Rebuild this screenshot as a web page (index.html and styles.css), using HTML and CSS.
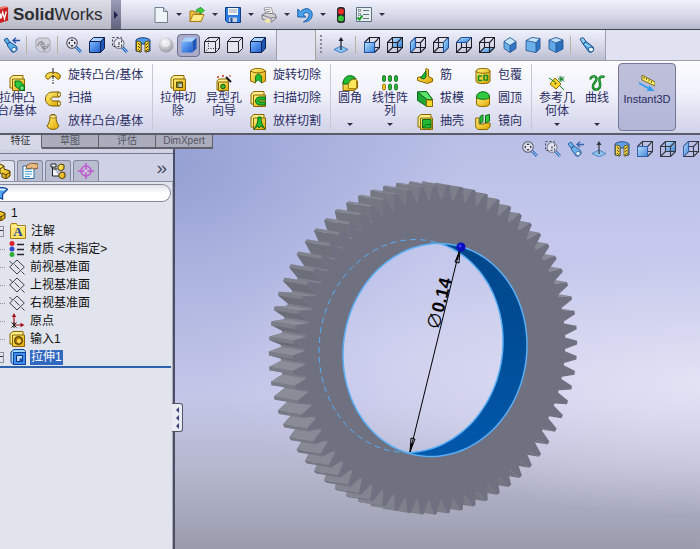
FILE: index.html
```html
<!DOCTYPE html>
<html lang="zh-CN">
<head>
<meta charset="utf-8">
<title>SolidWorks</title>
<link rel="stylesheet" href="styles.css">
<script src="gear.js" defer></script>
</head>
<body>
<svg class="sprite" aria-hidden="true">
  <defs>
    <linearGradient id="blue" x1="0" y1="0" x2="1" y2="1"><stop offset="0" stop-color="#b9e2ff"/><stop offset="1" stop-color="#2f7fd8"/></linearGradient>
    <linearGradient id="deep" x1="0" y1="0" x2="1" y2="1"><stop offset="0" stop-color="#7db8ff"/><stop offset="1" stop-color="#1f5fd0"/></linearGradient>
    <linearGradient id="gold" x1="0" y1="0" x2="1" y2="1"><stop offset="0" stop-color="#fff27a"/><stop offset="1" stop-color="#e0a500"/></linearGradient>
    <radialGradient id="ball" cx=".4" cy=".3" r=".7"><stop offset="0" stop-color="#fff"/><stop offset="1" stop-color="#9b9ca6"/></radialGradient>
    <linearGradient id="wall" x1="0" y1="0" x2="0" y2="1"><stop offset="0" stop-color="#00417f"/><stop offset=".45" stop-color="#004c94"/><stop offset="1" stop-color="#0060ba"/></linearGradient>
  </defs>
  <symbol id="new" viewBox="0 0 16 16"><path d="M2 .5h8.500l4 4v11H2z" fill="#eef4f8" stroke="#71808d"/><path d="M10.500.5v4h4" fill="#cfdbe4" stroke="#71808d"/></symbol>
  <symbol id="open" viewBox="0 0 16 16"><path d="M1 14.500V4h4l1 2h6v8.500z" fill="#f3c33c" stroke="#a8780c"/><path d="M1 14.500l3-7h11l-3 7z" fill="#ffe98a" stroke="#a8780c"/><path d="M7 5c0-3 2-4 4-3.500V0l4.500 3.500L11 7V5C9.500 4 8 4 7 5z" fill="#3fcf3a" stroke="#178a1a" stroke-width=".7"/></symbol>
  <symbol id="save" viewBox="0 0 16 16"><path d="M.5.5h15v15h-13l-2-2z" fill="#2d7be0" stroke="#123f86"/><path d="M3 1h10v7H3z" fill="#f4f6f8"/><path d="M4 3h8M4 5h8" stroke="#9aa2ac"/><path d="M4 10.500h8V15H4z" fill="#c9d2da"/><path d="M5.500 11h2v4h-2z" fill="#174b9a"/></symbol>
  <symbol id="print" viewBox="0 0 16 16"><path d="M3 1l7-1 2 6-7 2z" fill="#fff" stroke="#8c8c92" stroke-width=".8"/><path d="M1 8l4-2 9 1 1.500 4-5 4L1 12z" fill="#d3d3d6" stroke="#66666c" stroke-width=".8"/><path d="M1 8l9 3 5.500-1M10 11v4M4 3l5-1M5 5l5-1" fill="none" stroke="#707078" stroke-width=".8"/><path d="M3 13l5-1 2 3-4 1z" fill="#f5e9a4"/></symbol>
  <symbol id="undo" viewBox="0 0 16 16"><path d="M.8 2v8h8L6 7.500c2.500-3 6.500-2.500 6 1-.4 2.500-2.500 4.500-5.500 6.500 6-.5 9-3.500 8.700-8C14.800 1.500 8-.5 3.500 4.700z" fill="#4aa3ee" stroke="#1b5aa8"/></symbol>
  <symbol id="light" viewBox="0 0 16 16"><rect x="4" y="0" width="8" height="16" rx="3" fill="#26282c"/><circle cx="8" cy="4.500" r="3" fill="#ee2c28"/><circle cx="8" cy="11.500" r="3" fill="#35c738"/></symbol>
  <symbol id="list" viewBox="0 0 16 16"><path d="M.5.5h15v14H.5z" fill="#e8eef0" stroke="#5c7282"/><path d="M2.500 2.500h2v2h-2zM2.500 6.500h2v2h-2z" fill="#fff" stroke="#637788" stroke-width=".8"/><path d="M7 3.500h6M7 7.500h6M7 11.500h6" stroke="#637788"/><path d="M1.500 10.500l2 2 3-4" fill="none" stroke="#159b20" stroke-width="2"/></symbol>
  <symbol id="scope" viewBox="0 0 16 16"><path d="M1 2l3-1.500 3 4L4 7z" fill="#8fd0f5" stroke="#1c4f8e"/><path d="M4 7l3-2.500 7 5.500c2 3-1 6-4 5z" fill="#4ba4e8" stroke="#1c4f8e"/><circle cx="12" cy="12.500" r="2.500" fill="#e8fbff" stroke="#1c4f8e"/><path d="M6 7l5 3" stroke="#d8f4ff"/></symbol>
  <symbol id="prev" viewBox="0 0 16 16"><path d="M0 3l3-2 3 4-3 2zM3 8l3-3 6 4c3 3 0 7-4 6z" fill="#5db2ec" stroke="#1c4f8e"/><circle cx="10" cy="12.500" r="2.200" fill="#e8fbff" stroke="#1c4f8e" stroke-width=".8"/><path d="M9 3.500h7M12 .8L9 3.500l3 2.700" fill="none" stroke="#2352a8" stroke-width="1.300"/></symbol>
  <symbol id="redraw" viewBox="0 0 16 16"><path d="M1 3l3-2h9l2 3v9l-2 2H5l-4-4z" fill="#d0d1d8" stroke="#a6a7b2"/><path d="M3 9c0-4 4-5 6-2M6 4l3 3-4 1M13 7c1 4-3 6-6 3M10 14l-3-4 4-1" fill="none" stroke="#8f919d" stroke-width="1.300"/></symbol>
  <symbol id="zoomfit" viewBox="0 0 16 16"><path d="M10 10l5 5" stroke="#2a69c0" stroke-width="3"/><path d="M10 10l5 5" stroke="#9ad0ff"/><circle cx="6" cy="6" r="5.300" fill="#e9ebf2" stroke="#5d6070" stroke-width="1.200"/><path d="M6 2l1.600 2H4.400zM6 10l1.600-2H4.400zM2 6l2-1.600v3.200zM10 6L8 4.400v3.200z" fill="#22232c"/></symbol>
  <symbol id="zoomarea" viewBox="0 0 16 16"><path d="M10 10l5 5" stroke="#2a69c0" stroke-width="3"/><path d="M10 10l5 5" stroke="#9ad0ff"/><circle cx="7" cy="6.500" r="5" fill="#e9ebf2" stroke="#80838f" stroke-width="1.200"/><path d="M.5.5h9v9h-9z" fill="none" stroke="#333540" stroke-dasharray="2 2"/><path d="M7 5v3" stroke="#333540"/></symbol>
  <symbol id="section" viewBox="0 0 16 16"><path d="M1 3c3-3 11-3 14 0v11l-4 1V7H6v8l-5-1z" fill="#4d9be8" stroke="#1d3f7a"/><path d="M1.500 4L6 5v10l-4.500-1zM10 5l4-1v10l-4 1z" fill="#ffd92e" stroke="#4a3a00" stroke-width=".8"/><path d="M3 6l2 2M3 9l2 2M3 12l2 2M11 8l2-2M11 11l2-2M11 14l2-2" stroke="#4a3a00"/></symbol>
  <symbol id="ball3" viewBox="0 0 16 16"><circle cx="8" cy="8" r="7.500" fill="url(#ball)"/><circle cx="8" cy="6" r="4" fill="#f4f4f8" opacity=".6"/></symbol>
  <symbol id="solid" viewBox="0 0 16 16"><path d="M.5 4.500h11v11H.5z" fill="url(#deep)"/><path d="M.5 4.500l4-4h11l-4 4z" fill="#a9d2ff"/><path d="M11.500 4.500l4-4v11l-4 4z" fill="#1e55b8"/></symbol>
  <symbol id="solidedge" viewBox="0 0 16 16"><use href="#solid"/><path d="M.5 4.500h11v11H.5zl4-4h11v11l-4 4M11.500 4.500l4-4" fill="none" stroke="#0f2250"/></symbol>
  <symbol id="hidden" viewBox="0 0 16 16"><path d="M.5 4.500h11v11H.5zl4-4h11v11l-4 4M11.500 4.500l4-4" fill="#e2e4ee" stroke="#25262e"/><path d="M4.500 1v10.500h11M4.500 11.500l-4 4" fill="none" stroke="#25262e" stroke-dasharray="1 1.500"/></symbol>
  <symbol id="nohidden" viewBox="0 0 16 16"><path d="M.5 4.500h11v11H.5zl4-4h11v11l-4 4M11.500 4.500l4-4" fill="#e2e4ee" stroke="#25262e"/></symbol>
  <symbol id="wire" viewBox="0 0 16 16"><path d="M.5 5.500h10v10H.5zM5.500.5h10v10h-10zM.5 5.500l5-5M10.500 5.500l5-5M.5 15.500l5-5M10.500 15.500l5-5" fill="none" stroke="#1d1e26" stroke-width="1.100"/></symbol>
  <symbol id="front" viewBox="0 0 16 16"><use href="#wire"/><path d="M.5 5.500h10v10H.5z" fill="url(#blue)" stroke="#1b4f9a"/></symbol>
  <symbol id="back" viewBox="0 0 16 16"><path d="M5.500.5h10v10h-10z" fill="url(#blue)"/><use href="#wire"/></symbol>
  <symbol id="left" viewBox="0 0 16 16"><use href="#wire"/><path d="M.5 5.500l5-5v10l-5 5z" fill="url(#blue)" stroke="#1b4f9a"/></symbol>
  <symbol id="right" viewBox="0 0 16 16"><use href="#wire"/><path d="M10.500 5.500l5-5v10l-5 5z" fill="url(#blue)" stroke="#1b4f9a"/></symbol>
  <symbol id="top" viewBox="0 0 16 16"><use href="#wire"/><path d="M.5 5.500l5-5h10l-5 5z" fill="url(#blue)" stroke="#1b4f9a"/></symbol>
  <symbol id="bottom" viewBox="0 0 16 16"><path d="M.5 15.500l5-5h10l-5 5z" fill="url(#blue)" stroke="#1b4f9a"/><use href="#wire"/></symbol>
  <symbol id="iso" viewBox="0 0 16 16"><path d="M8 .5l6 4v7l-6 4-6-4v-7z" fill="#69afe9"/><path d="M8 .5l6 4-6 4-6-4z" fill="#c7e5fb"/><path d="M14 4.500v7l-6 4v-7z" fill="#3277c5"/><path d="M8 .5l6 4v7l-6 4-6-4v-7zM2 4.500l6 4 6-4M8 8.500v7" fill="none" stroke="#234f8b" stroke-width=".8"/></symbol>
  <symbol id="tri" viewBox="0 0 16 16"><path d="M1 3.500l6-3 8 1v10l-4 4-10-2z" fill="#69afe9"/><path d="M1 3.500l6-3 8 1-4 4z" fill="#c7e5fb"/><path d="M15 1.500v10l-4 4v-10z" fill="#3277c5"/><path d="M1 3.500l6-3 8 1v10l-4 4-10-2zl10 2 4-4M11 5.500v10" fill="none" stroke="#234f8b" stroke-width=".8"/></symbol>
  <symbol id="di" viewBox="0 0 16 16"><path d="M1 3l7-2.500L15 3v9l-7 3.500L1 12z" fill="#60a8e8"/><path d="M1 3l7-2.500L15 3 8 6z" fill="#bcdffa"/><path d="M15 3v9l-7 3.500V6z" fill="#2b6fc0"/><path d="M1 3l7-2.500L15 3v9l-7 3.500L1 12zl7 3 7-3M8 6v9" fill="none" stroke="#234f8b" stroke-width=".8"/></symbol>
  <symbol id="normal" viewBox="0 0 16 16"><path d="M1 12.500L8 9l7 3.500L8 16z" fill="#86c3f1" stroke="#2f6bae" stroke-width=".8"/><path d="M8 13V2" stroke="#1c1d26" stroke-width="1.200"/><path d="M8 0l2.500 4h-5z" fill="#1c1d26"/></symbol>
  <symbol id="box" viewBox="0 0 16 16"><path d="M1 3l3-2.500h10v9L11 13H1z" fill="#fff08a" stroke="#8a6500"/><path d="M3.500 4h12v11.500h-12z" fill="url(#gold)" stroke="#8a6500"/></symbol>
  <symbol id="extrude" viewBox="0 0 16 16"><use href="#box"/><path d="M6 6h5l4.500 5v4.500H12L6 11z" fill="#2fc83e" stroke="#0b6b18"/><path d="M11 11h4v4h-4z" fill="#77f081" stroke="#0b6b18" stroke-width=".8"/></symbol>
  <symbol id="revolve" viewBox="0 0 16 16"><path d="M.7 8c0-5 14.600-5 14.600 0 0 4-3.500 4-4.300 1.500-1-1.500-5-1.500-6 0C4.200 12 .7 12 .7 8z" fill="url(#gold)" stroke="#7a5900"/><path d="M8 0v16" stroke="#222" stroke-dasharray="4 1 1 1"/></symbol>
  <symbol id="sweep" viewBox="0 0 16 16"><path d="M14 1H8C-2 1-2 15 8 15h6v-5H9c-4 0-4-4 0-4h5z" fill="url(#gold)" stroke="#7a5900"/><ellipse cx="14" cy="3.500" rx="1.500" ry="2.500" fill="#fff2a0" stroke="#7a5900"/><ellipse cx="14" cy="12.500" rx="1.500" ry="2.500" fill="#fff2a0" stroke="#7a5900"/></symbol>
  <symbol id="loft" viewBox="0 0 16 16"><path d="M5 2c0-2 6-2 6 0 0 5 1 7 3 10-2 4.500-10 4.500-12 0 2-3 3-5 3-10z" fill="url(#gold)" stroke="#7a5900"/><ellipse cx="8" cy="2.500" rx="3" ry="1.500" fill="#fff2a0" stroke="#7a5900" stroke-width=".7"/></symbol>
  <symbol id="cut" viewBox="0 0 16 16"><use href="#box"/><path d="M6.500 7h6v5.500h-6z" fill="#6a7f2b" stroke="#5a4700"/><path d="M8.500 9H12v3H8.500z" fill="#bfc9c0"/></symbol>
  <symbol id="hole" viewBox="0 0 16 16"><path d="M1 6l2-2h9v8l-2 3H1z" fill="#fff08a" stroke="#8a6500"/><path d="M2.500 7h10v8.500h-10z" fill="url(#gold)" stroke="#8a6500"/><circle cx="7" cy="11.500" r="2.300" fill="#42b62e" stroke="#155a15"/><path d="M10 2l5 5" stroke="#15151a" stroke-width="2"/><path d="M2 1v2M1 2h2M7 0v2M6 1h2M14 0v2" stroke="#d3261c"/></symbol>
  <symbol id="revcut" viewBox="0 0 16 16"><path d="M.5 3c2-3.500 13-3.500 15 0v10l-4 2V9c-1-3-5-3-6 0v6l-5-2z" fill="url(#gold)" stroke="#8a6500"/><path d="M.5 3c4 2.500 11 2.500 15 0" fill="none" stroke="#8a6500"/><path d="M5.500 14V9c1-4 5-4 6 0v6l-3-3z" fill="#21bb35" stroke="#0b6b18" stroke-width=".7"/></symbol>
  <symbol id="sweepcut" viewBox="0 0 16 16"><use href="#box"/><path d="M15.500 6H10c-6 0-6 8 0 8h5.500v-3H10c-2 0-2-2 0-2h5.500z" fill="#21bb35" stroke="#0b6b18"/></symbol>
  <symbol id="loftcut" viewBox="0 0 16 16"><use href="#box"/><path d="M8 3h3c0 5 1 8 4 12l-4-3-2 2-1-2-4 3c3-4 4-7 4-12z" fill="#21bb35" stroke="#0b6b18"/></symbol>
  <symbol id="fillet" viewBox="0 0 16 16"><path d="M1 7l5-5h5l4.500 4v7L12 15.500H1z" fill="url(#gold)" stroke="#8a6500"/><path d="M1 9C1 3 5 0 9 .8c2 .2 4 1.200 5 3.200-5-1-7 2-7.500 5z" fill="#21bb35" stroke="#0b6b18"/><path d="M6.500 9c1-4 4-5 8-4.500v9H6.500z" fill="#ffe65a" stroke="#8a6500" stroke-width=".7"/></symbol>
  <symbol id="pattern" viewBox="0 0 16 16"><g fill="#25bd36" stroke="#0b5b17" stroke-width=".8"><rect x=".5" y=".5" width="3" height="6" rx="1.500"/><rect x="6.500" y=".5" width="3" height="6" rx="1.500"/><rect x="12.500" y=".5" width="3" height="6" rx="1.500"/><rect x="6.500" y="9" width="3" height="6" rx="1.500"/><rect x="12.500" y="9" width="3" height="6" rx="1.500"/></g><rect x=".5" y="9" width="3" height="6" rx="1.500" fill="#f0c020" stroke="#8a6500" stroke-width=".8"/></symbol>
  <symbol id="rib" viewBox="0 0 16 16"><path d="M9 .5l2.500 1v7l4 2v3l-5 2-10-3v-3L8 8z" fill="url(#gold)" stroke="#8a6500"/><path d="M3.500 10L9 3v6l-2 2z" fill="#21bb35" stroke="#0b6b18"/></symbol>
  <symbol id="draft" viewBox="0 0 16 16"><path d="M.5 1l9-.5 6 8v7H10l-9.500-6z" fill="#20a832" stroke="#0b6b18"/><path d="M.5 1l9-.5 6 8H10z" fill="#5ee36b" stroke="#0b6b18"/><path d="M9.500 9h6v6.500h-6z" fill="#ffd92e" stroke="#8a6500"/></symbol>
  <symbol id="shell" viewBox="0 0 16 16"><use href="#box"/><path d="M5.500 5.500h8.500V14H5.500z" fill="#21bb35" stroke="#0b6b18"/><path d="M5.500 14L9 10.500h5" fill="none" stroke="#0b6b18"/></symbol>
  <symbol id="wrap" viewBox="0 0 16 16"><path d="M1 3c0-3.500 14-3.500 14 0v10c0 3.500-14 3.500-14 0z" fill="url(#gold)" stroke="#8a6500"/><path d="M1 3c0 3 14 3 14 0" fill="none" stroke="#8a6500"/><path d="M7 8H3.500v4.500H7M9 7.500h3.500v4.500H9z" fill="none" stroke="#128f24" stroke-width="1.600"/></symbol>
  <symbol id="dome" viewBox="0 0 16 16"><path d="M1.500 6v7c0 3.500 13 3.500 13 0V6z" fill="url(#gold)" stroke="#8a6500"/><path d="M1.500 6c0-7 13-7 13 0 0 3-13 3-13 0z" fill="#2fc83e" stroke="#0b6b18"/></symbol>
  <symbol id="mirror" viewBox="0 0 16 16"><path d="M.7 4H4v6h5V9h6v4l-3 2.500H3L.7 13z" fill="url(#gold)" stroke="#8a6500"/><path d="M5 2.500L8 .8v6.700L5 9.500zM10.500 1.500l4-1V7l-4 2z" fill="#2fc83e" stroke="#0b6b18"/></symbol>
  <symbol id="refgeo" viewBox="0 0 16 16"><path d="M6 3l6 6-5 5-6-5z" fill="#ffd92e" stroke="#8a6500"/><path d="M0 3l6 4M12 1v6M9 4h6M10 1.500l5 5M15 1.500l-5 5M11 11l4 4" stroke="#117d20"/><circle cx="6.500" cy="8.500" r="1" fill="#553f00"/></symbol>
  <symbol id="curve" viewBox="0 0 16 16"><path d="M1.500 4.500C1.500 1 7 0 7.500 3.500S3 8 4 12.500c1 3 6 3 7-1s-2-6 0-9c1-1.500 3-1 4.500-.5" fill="none" stroke="#0b6b18" stroke-width="2.400"/><path d="M1.500 4.500C1.500 1 7 0 7.500 3.500S3 8 4 12.500c1 3 6 3 7-1s-2-6 0-9c1-1.500 3-1 4.500-.5" fill="none" stroke="#35c648"/></symbol>
  <symbol id="instant" viewBox="0 0 16 16"><path d="M3 0l13 7v4L3 5z" fill="#ffef6a" stroke="#5e5300" stroke-width=".8"/><path d="M5 2v2M7.500 3v2M10 4.500v2M12.500 6v2" stroke="#5e5300" stroke-width=".8"/><path d="M0 7l10 5.500V10l5.500 6h-8l1.500-2L0 9z" fill="#2f9df0"/></symbol>
  <symbol id="part" viewBox="0 0 16 16"><path d="M1 4l4-3 4 2v3l6 2v5l-4 3-4-2v-3L1 8z" fill="url(#gold)" stroke="#4d3800"/><path d="M1 4l4 2 4-3M5 6v4M7 10l4 2 4-3M11 12v4" fill="none" stroke="#4d3800"/></symbol>
  <symbol id="props" viewBox="0 0 16 16"><path d="M1 3h11v12.500H1z" fill="#fff" stroke="#2c6ea8"/><path d="M3 6h7M3 8.500h7M3 11h7M3 13.500h5" stroke="#3c9ad8"/><path d="M4 3l5-3 7 1v4l-4 1-2-1-5 1z" fill="#e9b982" stroke="#6d4215" stroke-width=".8"/></symbol>
  <symbol id="config" viewBox="0 0 16 16"><path d="M1 1h5v3H1zM2.500 4v9H9M2.500 6H7" fill="#f6f6f6" stroke="#222"/><path d="M8 3l3-2 3 1v4l-3 2-3-2zM9 11l3-2 3 1v4l-3 2-3-2z" fill="url(#gold)" stroke="#4d3800"/></symbol>
  <symbol id="target" viewBox="0 0 16 16"><circle cx="8" cy="8" r="5" fill="none" stroke="#c155cf" stroke-width="1.500"/><path d="M8 0v16M0 8h16" stroke="#c155cf" stroke-width="1.500"/><circle cx="8" cy="8" r="1.500" fill="#e8c8ee"/></symbol>
  <symbol id="filter" viewBox="0 0 16 16"><path d="M0 3c2-3 14-3 16 0l-6 6v6l-4-2V9z" fill="#4ea4f2" stroke="#123f96" stroke-width="1.500"/><ellipse cx="8" cy="3" rx="6" ry="1.200" fill="#d5edff"/></symbol>
  <symbol id="note" viewBox="0 0 16 16"><path d="M.5 15.500V2.500l1-2h5l1 2h8v13z" fill="#ffe36a" stroke="#a87d12"/><path d="M1 3.500h14" stroke="#fff6bd"/></symbol>
  <symbol id="material" viewBox="0 0 16 16"><circle cx="3" cy="2.500" r="2.500" fill="#d9232e"/><circle cx="3" cy="8" r="2.500" fill="#2a4bc9"/><circle cx="3" cy="13.500" r="2.500" fill="#2fae3c"/><path d="M8 3.500h7M8 8.500h7M8 13.500h7" stroke="#25252b" stroke-width="1.300"/></symbol>
  <symbol id="plane" viewBox="0 0 16 16"><path d="M.7 8L8 1l7.300 7L8 15zM.5 2l3 3M12.500 12.500l3 3M5.500 5.500l5 5" fill="none" stroke="#2e2e36" stroke-width=".9"/></symbol>
  <symbol id="origin" viewBox="0 0 16 16"><path d="M5 12V2M5 12h9" stroke="#a8121c" stroke-width="1.200"/><path d="M5 0l2.200 4H2.800zM15.500 12l-4-2.200v4.400z" fill="#a8121c"/><path d="M2.500 9.500l5 5M7.500 9.500l-5 5M5 9v6" stroke="#222"/></symbol>
  <symbol id="import" viewBox="0 0 16 16"><use href="#box"/><circle cx="9.500" cy="9.500" r="4" fill="#b07c00" stroke="#3d2b00"/><circle cx="10" cy="10" r="2" fill="#ffe25a"/></symbol>
  <symbol id="boss" viewBox="0 0 16 16"><path d="M1 3l3-2.500h10l1.500 2v13H3L1 13z" fill="#9ed5ff" stroke="#123f96"/><path d="M3.500 3.500h12v12h-12z" fill="#3a8ff0" stroke="#123f96"/><path d="M6.500 6.500h6v6h-6z" fill="#b9dcff" stroke="#0c2f78"/><path d="M9.500 9.500h3v3h-3z" fill="#1b50b0"/></symbol>
</svg>

<header class="titlebar">
  <div class="brand">
    <svg class="cube" viewBox="0 0 10 20" aria-hidden="true"><path d="M0 3l9-2v15l-9 3z" fill="#c9201f"/><path d="M0 1l6-1 3 1-9 3z" fill="#f07a70"/><path d="M0 8l1 6 2-7 2 7 2-8" fill="none" stroke="#fff" stroke-width="1.500"/></svg>
    <span><b>Solid</b>Works</span>
  </div>
  <button class="expand" aria-label="菜单"><i class="tri-right"></i></button>
  <nav class="quick">
    <button aria-label="新建"><svg><use href="#new"/></svg></button><i class="caret"></i>
    <button aria-label="打开"><svg><use href="#open"/></svg></button><i class="caret"></i>
    <button aria-label="保存"><svg><use href="#save"/></svg></button><i class="caret"></i>
    <button aria-label="打印"><svg><use href="#print"/></svg></button><i class="caret"></i>
    <button aria-label="撤消"><svg><use href="#undo"/></svg></button><i class="caret"></i>
    <button aria-label="重建模型"><svg><use href="#light"/></svg></button>
    <button aria-label="选项"><svg><use href="#list"/></svg></button><i class="caret"></i>
  </nav>
</header>

<div class="toolbars">
  <div class="bar bar-view">
    <button aria-label="上一视图"><svg><use href="#prev"/></svg></button><i class="sep"></i>
    <button aria-label="重画"><svg><use href="#redraw"/></svg></button><i class="sep"></i>
    <button aria-label="整屏显示"><svg><use href="#zoomfit"/></svg></button>
    <button aria-label="视图"><svg><use href="#solidedge"/></svg></button>
    <button aria-label="局部放大"><svg><use href="#zoomarea"/></svg></button>
    <button aria-label="剖面视图"><svg><use href="#section"/></svg></button>
    <button aria-label="外观"><svg><use href="#ball3"/></svg></button>
    <button class="pressed" aria-label="上色"><svg><use href="#solid"/></svg></button>
    <button aria-label="隐藏线可见"><svg><use href="#hidden"/></svg></button>
    <button aria-label="消除隐藏线"><svg><use href="#nohidden"/></svg></button>
    <button aria-label="带边线上色"><svg><use href="#solidedge"/></svg></button>
  </div>
  <div class="bar bar-std">
    <i class="grip"></i>
    <button aria-label="正视于"><svg><use href="#normal"/></svg></button><i class="sep"></i>
    <button aria-label="前视"><svg><use href="#front"/></svg></button>
    <button aria-label="后视"><svg><use href="#back"/></svg></button>
    <button aria-label="左视"><svg><use href="#left"/></svg></button>
    <button aria-label="右视"><svg><use href="#right"/></svg></button>
    <button aria-label="上视"><svg><use href="#top"/></svg></button>
    <button aria-label="下视"><svg><use href="#bottom"/></svg></button>
    <button aria-label="等轴测"><svg><use href="#iso"/></svg></button>
    <button aria-label="左右二等角轴测"><svg><use href="#tri"/></svg></button>
    <button aria-label="上下二等角轴测"><svg><use href="#di"/></svg></button><i class="sep"></i>
    <button aria-label="视图定向"><svg><use href="#scope"/></svg></button>
  </div>
</div>

<section class="ribbon">
  <button class="big first"><svg><use href="#extrude"/></svg><span>拉伸凸<br>台/基体</span></button>
  <div class="stack stack-a">
    <button><svg><use href="#revolve"/></svg>旋转凸台/基体</button>
    <button><svg><use href="#sweep"/></svg>扫描</button>
    <button><svg><use href="#loft"/></svg>放样凸台/基体</button>
  </div>
  <i class="rule"></i>
  <button class="big"><svg><use href="#cut"/></svg><span>拉伸切<br>除</span></button>
  <button class="big"><svg><use href="#hole"/></svg><span>异型孔<br>向导</span></button>
  <div class="stack stack-b">
    <button><svg><use href="#revcut"/></svg>旋转切除</button>
    <button><svg><use href="#sweepcut"/></svg>扫描切除</button>
    <button><svg><use href="#loftcut"/></svg>放样切割</button>
  </div>
  <i class="rule"></i>
  <button class="big narrow"><svg><use href="#fillet"/></svg><span>圆角</span><i class="caret"></i></button>
  <button class="big"><svg><use href="#pattern"/></svg><span>线性阵<br>列</span><i class="caret"></i></button>
  <div class="stack stack-c">
    <button><svg><use href="#rib"/></svg>筋</button>
    <button><svg><use href="#draft"/></svg>拔模</button>
    <button><svg><use href="#shell"/></svg>抽壳</button>
  </div>
  <div class="stack stack-c">
    <button><svg><use href="#wrap"/></svg>包覆</button>
    <button><svg><use href="#dome"/></svg>圆顶</button>
    <button><svg><use href="#mirror"/></svg>镜向</button>
  </div>
  <i class="rule"></i>
  <button class="big"><svg><use href="#refgeo"/></svg><span>参考几<br>何体</span><i class="caret"></i></button>
  <button class="big narrow"><svg><use href="#curve"/></svg><span>曲线</span><i class="caret"></i></button>
  <button class="big instant"><svg><use href="#instant"/></svg><span>Instant3D</span></button>
</section>

<main class="workspace">
  <aside class="side">
    <nav class="tabs">
      <button class="active">特征</button><button>草图</button><button>评估</button><button>DimXpert</button>
    </nav>
    <div class="panel">
      <div class="ptabs">
        <button class="active" aria-label="设计树"><svg><use href="#part"/></svg></button>
        <button aria-label="属性"><svg><use href="#props"/></svg></button>
        <button aria-label="配置"><svg><use href="#config"/></svg></button>
        <button aria-label="尺寸专家"><svg><use href="#target"/></svg></button>
        <span class="more">»</span>
      </div>
      <div class="filter"><svg><use href="#filter"/></svg><input type="text" aria-label="过滤"></div>
      <ul class="tree">
        <li class="root"><svg><use href="#part"/></svg><span>1</span></li>
        <li class="plus"><svg><use href="#note"/><text x="8" y="13" text-anchor="middle" class="letter">A</text></svg><span>注解</span></li>
        <li><svg><use href="#material"/></svg><span>材质 &lt;未指定&gt;</span></li>
        <li><svg><use href="#plane"/></svg><span>前视基准面</span></li>
        <li><svg><use href="#plane"/></svg><span>上视基准面</span></li>
        <li><svg><use href="#plane"/></svg><span>右视基准面</span></li>
        <li><svg><use href="#origin"/></svg><span>原点</span></li>
        <li><svg><use href="#import"/></svg><span>输入1</span></li>
        <li class="plus selected"><svg><use href="#boss"/></svg><span>拉伸1</span></li>
      </ul>
    </div>
    <button class="splitter" aria-label="折叠"><i></i><i></i><i></i></button>
  </aside>
  <section class="viewport">
    <svg class="scene" viewBox="175 135 525 414" role="img" aria-label="齿轮">
      <g id="gear"></g>
      <path d="M410 452L460 248" stroke="#000"/>
      <path d="M460 250l-5 12 4 1zM410 452l1-14 4 1z" fill="none" stroke="#000"/>
      <path d="M460 250l-4 10h2zM410 452l1-9 2 1z" fill="#000"/>
      <circle cx="461" cy="247" r="4.500" fill="#0a0cc0"/><circle cx="460" cy="246" r="1.500" fill="#3c40f0"/>
      <text transform="translate(439 331) rotate(-76)" class="dim"><tspan class="dia">∅</tspan>0.14</text>
    </svg>
    <div class="hud">
      <button aria-label="整屏显示"><svg><use href="#zoomfit"/></svg></button>
      <button aria-label="局部放大"><svg><use href="#zoomarea"/></svg></button>
      <button aria-label="上一视图"><svg><use href="#prev"/></svg></button>
      <button aria-label="正视于"><svg><use href="#normal"/></svg></button>
      <button aria-label="剖面视图"><svg><use href="#section"/></svg></button>
      <button aria-label="前视"><svg><use href="#front"/></svg></button>
      <button aria-label="后视"><svg><use href="#back"/></svg></button>
      <button aria-label="左视"><svg><use href="#left"/></svg></button>
    </div>
  </section>
</main>
</body>
</html>
```
FILE: styles.css
```css
* { box-sizing: border-box; }
body {
  margin: 0;
  min-height: 100vh;
  display: flex;
  flex-direction: column;
  overflow: hidden;
  font: 12px/13px "Liberation Sans", "Noto Sans CJK SC", sans-serif;
  background: #e1e4ec;
  color: #111;
}
button {
  border: 0;
  padding: 0;
  margin: 0;
  background: none;
  font: inherit;
  color: inherit;
  display: flex;
  align-items: center;
  justify-content: center;
  flex: none;
}
svg { width: 16px; height: 16px; flex: none; display: block; }
.sprite { position: absolute; width: 0; height: 0; }
.caret {
  border: 3px solid transparent;
  border-top-color: #30324a;
  border-bottom: 0;
  flex: none;
}

.titlebar {
  height: 30px;
  display: flex;
  align-items: stretch;
  background: linear-gradient(#f0f1fc, #d6d8e8 55%, #b7bacd);
  border-bottom: 1px solid #45464e;
}
.brand {
  width: 111px;
  display: flex;
  align-items: center;
  gap: 4px;
  font-size: 17px;
  line-height: 20px;
  color: #2b2b30;
  background: linear-gradient(#dcdde6, #b9bac6);
}
.brand .cube { width: 9px; height: 20px; }
.expand { width: 10px; background: linear-gradient(#9b9db8, #62647f); }
.tri-right { border: 4px solid transparent; border-left-color: #1f2450; border-right: 0; }
.quick { display: flex; align-items: center; padding-left: 32px; }
.quick button { width: 16px; height: 24px; margin-right: 7px; }
.quick .caret { margin-right: 7px; }

.toolbars {
  height: 31px;
  display: flex;
  background: #e0e1f1;
  border-bottom: 1px solid #9c9ca6;
}
.bar {
  display: flex;
  align-items: center;
  background: linear-gradient(#eef0fc, #d8daea 50%, #bcbfd2);
  border-right: 1px solid #9fa0ac;
}
.bar button { width: 23px; height: 23px; }
.bar-view { width: 277px; }
.bar-std { width: 291px; margin-left: 38px; border-left: 1px solid #aaa391; }
.sep { width: 1px; height: 18px; margin: 0 4px 0 3px; background: #b9b29c; flex: none; }
.bar .pressed {
  border: 1px solid #6d6f92;
  border-radius: 4px;
  background: #a9abc8;
}
.grip { width: 2px; height: 20px; margin: 0 7px 0 4px; background: repeating-linear-gradient(#86889a 0 2px, transparent 2px 4px); }

.ribbon {
  height: 74px;
  display: flex;
  align-items: flex-start;
  background: linear-gradient(#fcfcff, #f0f1fb 45%, #d0d2e8);
  border-bottom: 2px solid #5b5c6a;
  color: #2a2c62;
}
.big {
  width: 46px;
  height: 72px;
  padding-top: 14px;
  flex-direction: column;
  justify-content: flex-start;
  white-space: nowrap;
  position: relative;
}
.big span { margin-top: 1px; }
.big .caret { position: absolute; bottom: 7px; left: calc(50% - 3px); }
.big.narrow { width: 34px; }
.big.first { margin-left: -6px; }
.stack { display: flex; flex-direction: column; padding-top: 3px; }
.stack button { height: 23px; gap: 7px; justify-content: flex-start; white-space: nowrap; }
.stack-a { width: 110px; padding-left: 5px; }
.stack-b { width: 81px; padding-left: 3px; }
.stack-c { width: 58px; padding-left: 4px; }
.rule { width: 1px; height: 66px; margin: 3px 2px; background: #c6c8d8; flex: none; }
.big.instant {
  width: 58px;
  height: 68px;
  margin: 2px 0 0 4px;
  padding-top: 11px;
  font-size: 11px;
  border: 1px solid #74769a;
  border-radius: 4px;
  background: linear-gradient(#bfc1da, #b4b6d8);
}
.instant span { margin-top: 2px; }

.workspace { flex: 1; display: flex; min-height: 0; }
.side {
  position: relative;
  z-index: 1;
  width: 175px;
  flex: none;
  display: flex;
  flex-direction: column;
}
.tabs { display: flex; width: max-content; height: 14px; color: #55565f; }
.tabs button {
  width: 57px;
  border: 1px solid #5f606b;
  border-width: 0 1px 2px 0;
  background: #abadbd;
  font-size: 10px;
  line-height: 12px;
}
.tabs .active { width: 42px; background: #d6d8e8; border-bottom-color: #d6d8e8; color: #333; }
.panel {
  flex: 1;
  background: #e1e4ec;
  border-right: 2px solid #4c4e63;
  box-shadow: inset -1px 0 #a9acbc;
}
.ptabs {
  display: flex;
  align-items: flex-end;
  gap: 2px;
  height: 33px;
  padding-top: 6px;
  background: linear-gradient(#d0d3e4 4px, #777a8e 4px 5px, #cfd2e6 5px);
  border-bottom: 1px solid #8d90a4;
}
.ptabs button {
  width: 26px;
  height: 21px;
  border: 1px solid #85889c;
  border-bottom: 0;
  border-radius: 3px 3px 0 0;
  background: #b9bdd0;
}
.ptabs .active { width: 15px; background: #e1e4ec; border-left: 0; overflow: hidden; }
.ptabs .active svg { margin-left: -8px; }
.more { margin: 0 6px 6px auto; font-size: 19px; line-height: 14px; color: #4a4c60; }
.filter {
  display: flex;
  align-items: center;
  height: 18px;
  margin: 2px 2px 0 0;
  border: 1px solid #85889a;
  border-left: 0;
  border-radius: 0 9px 9px 0;
  background: linear-gradient(#dfe1ea, #fff 50%);
}
.filter svg { width: 14px; height: 13px; margin-left: -6px; }
.filter input { flex: 1; min-width: 0; border: 0; background: none; outline: 0; height: 16px; }
.tree { list-style: none; margin: 2px 2px 0 0; padding: 0; border-bottom: 2px solid #2b62ab; }
.tree li { display: flex; align-items: center; height: 18px; gap: 4px; }
.tree li::before { content: ""; width: 5px; border-top: 1px dotted #8d8f98; }
.tree .plus::before {
  height: 9px;
  margin: 0 2px 0 -2px;
  border: 1px solid #8b8e9e;
  border-left: 0;
  background: linear-gradient(transparent 3px, #333 3px 4px, transparent 4px);
}
.tree .root::before { display: none; }
.tree .root svg { margin-left: -10px; }
.tree span { padding: 1px; }
.tree .selected span { background: #3168c0; color: #fff; }
.letter { font: bold 13px "Liberation Serif", serif; fill: #1b3f94; }
.splitter {
  position: absolute;
  left: 172px;
  top: 268px;
  width: 11px;
  height: 29px;
  flex-direction: column;
  gap: 2px;
  background: #e9ebf2;
  border: 1px solid #55576b;
  border-left: 0;
  border-radius: 0 3px 3px 0;
}
.splitter i { border: 3px solid transparent; border-right-color: #3d3f78; border-left: 0; }

.viewport {
  flex: 1;
  position: relative;
  min-width: 0;
  overflow: hidden;
  background:
    radial-gradient(ellipse 70% 32% at 100% 60%, rgba(230, 230, 246, .9), transparent),
    radial-gradient(ellipse 40% 30% at 48% 55%, rgba(210, 211, 240, .6), transparent),
    radial-gradient(ellipse 55% 55% at 0 8%, rgba(140, 153, 206, .8), transparent),
    linear-gradient(#b9bfe6, #c4c8ec 25%, #c4c6e8 64%, #b6b8cf 80%, #9a9cad);
}
.scene { position: absolute; inset: 0; width: 100%; height: 100%; }
.dim { font: bold 18px "Liberation Sans", sans-serif; }
.dia { font-weight: normal; }
.hud { position: absolute; top: 2px; right: -2px; display: flex; opacity: .85; }
.hud button { width: 23px; height: 23px; }
```
FILE: gear.js
```js
// Draws a spur gear as an extruded outline: back profile, side walls, front face.
(function () {
  const NS = "http://www.w3.org/2000/svg";
  const host = document.getElementById("gear");
  const cx = 435, cy = 350;        // centre of the front face
  const dx = -24, dy = -4;         // offset of the back face
  const skew = 0.045;              // tilt of the projected circle
  const teeth = 68;
  const field = "M250 150H650V540H250Z";

  function at(angle, scale) {
    return [
      cx + 92 * scale * Math.cos(angle),
      cy + 106.5 * scale * Math.sin(angle - skew)
    ];
  }
  function add(tag, attrs, parent) {
    const el = document.createElementNS(NS, tag);
    for (const key in attrs) el.setAttribute(key, attrs[key]);
    (parent || host).appendChild(el);
    return el;
  }
  function path(points) {
    return "M" + points.map(p => p[0].toFixed(1) + " " + p[1].toFixed(1)).join("L") + "Z";
  }
  const shift = p => [p[0] + dx, p[1] + dy];

  const outline = [];
  const step = 2 * Math.PI / teeth;
  const tip = 1.545, root = 1.415;
  for (let i = 0; i < teeth; i++) {
    const a = i * step;
    outline.push(at(a - step * 0.42, root), at(a - step * 0.12, tip), at(a + step * 0.12, tip), at(a + step * 0.42, root));
  }

  const bore = [];
  for (let i = 0; i < 120; i++) bore.push(at(i * Math.PI / 60, 1));
  const backBore = bore.map(shift);

  add("path", { d: path(bore) }, add("clipPath", { id: "opening" }));
  add("path", { d: field + path(bore), "clip-rule": "evenodd" }, add("clipPath", { id: "farside" }));

  add("path", { d: path(outline.map(shift)) + path(backBore), fill: "#7c7e8a", "fill-rule": "evenodd" });

  // Side walls that face the viewer, far ones first. Light falls from above.
  const walls = [];
  outline.forEach((p, i) => {
    const q = outline[(i + 1) % outline.length];
    const nx = q[1] - p[1], ny = p[0] - q[0];
    if (nx * dx + ny * dy <= 0) return;
    const len = Math.hypot(nx, ny) || 1;
    const lowerHalf = (p[1] - cy) / 165;
    const tone = Math.round(122 - 18 * ny / len + 6 * lowerHalf);
    walls.push({
      depth: (p[0] + q[0]) * dx + (p[1] + q[1]) * dy,
      d: path([p, q, shift(q), shift(p)]),
      fill: "rgb(" + [tone, tone + 2, tone + 13].join(",") + ")"
    });
  });
  walls.sort((a, b) => a.depth - b.depth);
  walls.forEach(w => add("path", { d: w.d, fill: w.fill }));

  // Inner wall of the bore: the part of the front opening outside the back opening.
  add("path", { d: field + path(backBore), fill: "url(#wall)", "fill-rule": "evenodd", "clip-path": "url(#opening)" });
  add("path", { d: path(backBore), fill: "none", stroke: "#5aaef5", "stroke-width": 1.5, "clip-path": "url(#opening)" });

  add("path", { d: path(outline) + path(bore), fill: "#6f7180", "fill-rule": "evenodd" });
  add("path", { d: path(backBore), fill: "none", stroke: "#5aaef5", "stroke-dasharray": "6 4", "clip-path": "url(#farside)" });
  add("path", { d: path(bore), fill: "none", stroke: "#5aaef5", "stroke-width": 1.5 });
})();
```
